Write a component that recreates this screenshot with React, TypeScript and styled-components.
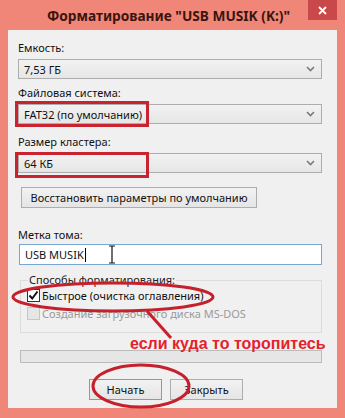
import React from 'react';
import styled, { createGlobalStyle } from 'styled-components';

const GlobalStyle = createGlobalStyle`
  html, body {
    margin: 0;
    padding: 0;
    background: #f08678;
  }
  * {
    box-sizing: border-box;
  }
`;

const Window = styled.div`
  position: relative;
  width: 345px;
  height: 418px;
  background: #f08678;
  display: flex;
  flex-direction: column;
  font-family: 'Noto Sans', 'Open Sans', sans-serif;
  font-size: 11px;
  color: #111;
  overflow: hidden;
`;

const TitleBar = styled.div`
  height: 30px;
  display: grid;
  grid-template-columns: 1fr auto 1fr;
  align-items: start;
  padding-right: 8px;
`;

const Title = styled.div`
  grid-column: 2;
  padding-top: 6px;
  font-size: 13.7px;
  font-weight: 700;
  color: #3a150f;
  white-space: nowrap;
`;

const CloseButton = styled.div`
  grid-column: 3;
  justify-self: end;
  width: 29px;
  height: 20px;
  background: #c9494b;
  color: #fff;
  display: flex;
  align-items: center;
  justify-content: center;
`;

const Content = styled.div`
  flex: 1;
  margin: 0 8px 10px;
  background: #f0f0f0;
  padding: 10px 15px 0 10px;
  display: flex;
  flex-direction: column;
`;

const Label = styled.div<{ $top?: number }>`
  line-height: 16px;
  margin-top: ${(p) => p.$top ?? 0}px;
`;

const Combo = styled.div<{ $top?: number }>`
  position: relative;
  height: 20px;
  margin-top: ${(p) => p.$top ?? 3}px;
  border: 1px solid #adadad;
  background: linear-gradient(#f2f2f2, #e6e6e6);
  display: flex;
  align-items: center;
  padding: 0 6px 0 5px;
`;

const ComboText = styled.span`
  flex: 1;
`;

const Highlight = styled.div<{ $top: number; $w: number }>`
  position: absolute;
  left: -4px;
  top: ${(p) => p.$top}px;
  width: ${(p) => p.$w}px;
  height: 26px;
  border: 3px solid #c8232e;
`;

const Button = styled.div<{ $w: number; $primary?: boolean }>`
  width: ${(p) => p.$w}px;
  height: 21px;
  border: 1px solid ${(p) => (p.$primary ? '#6aa2d6' : '#adadad')};
  background: linear-gradient(#f2f2f2, #e5e5e5);
  display: flex;
  align-items: center;
  justify-content: center;
  white-space: nowrap;
`;

const ResetRow = styled.div`
  margin-top: 14px;
  padding-left: 3px;
`;

const TextInput = styled.div`
  position: relative;
  height: 21px;
  margin-top: 1px;
  margin-left: 1px;
  border: 1px solid #7aa7d2;
  background: #fff;
  display: flex;
  align-items: center;
  padding-left: 5px;
`;

const Caret = styled.span`
  display: inline-block;
  width: 1px;
  height: 14px;
  background: #000;
  margin-left: 1px;
`;

const IBeam = styled.svg`
  position: absolute;
  left: 88px;
  top: 0;
`;

const GroupBox = styled.fieldset`
  margin: 8px 0 0 2px;
  padding: 0 0 7px 6px;
  height: 60px;
  border: 1px solid #dcdcdc;
  display: flex;
  flex-direction: column;
  gap: 2px;
`;

const Legend = styled.legend`
  padding: 0 1px;
  margin-left: 1px;
  line-height: 14px;
  color: #222;
`;

const CheckRow = styled.div<{ $disabled?: boolean }>`
  display: flex;
  align-items: center;
  gap: 2px;
  height: 16px;
  color: ${(p) => (p.$disabled ? '#9a9a9a' : '#111')};
`;

const Box = styled.div<{ $disabled?: boolean }>`
  width: 13px;
  height: 13px;
  border: 1px solid ${(p) => (p.$disabled ? '#c6c6c6' : '#333')};
  background: ${(p) => (p.$disabled ? '#e6e6e6' : '#fff')};
  display: flex;
  align-items: center;
  justify-content: center;
`;

const Progress = styled.div`
  margin: 17px 0 0 2px;
  height: 13px;
  border: 1px solid #bcbcbc;
  background: #e6e6e6;
`;

const Footer = styled.div`
  margin-top: 16px;
  display: flex;
  justify-content: center;
  gap: 8px;
  padding-right: 8px;
`;

const Annotations = styled.svg`
  position: absolute;
  left: 0;
  top: 0;
  pointer-events: none;
`;

const Note = styled.div`
  position: absolute;
  left: 130px;
  top: 335px;
  font-family: 'Liberation Sans', Arial, sans-serif;
  font-size: 16px;
  font-weight: 700;
  color: #e4222c;
  white-space: nowrap;
`;

const Chevron = () => (
  <svg width="9" height="6" viewBox="0 0 9 6">
    <polyline points="1,1 4.5,4.5 8,1" fill="none" stroke="#7a7a7a" strokeWidth="1.6" />
  </svg>
);

const Select = ({
  value,
  top,
  highlight,
}: {
  value: string;
  top?: number;
  highlight?: { top: number; w: number };
}) => (
  <Combo $top={top}>
    <ComboText>{value}</ComboText>
    <Chevron />
    {highlight && <Highlight $top={highlight.top} $w={highlight.w} />}
  </Combo>
);

const App = () => {
  return (
    <>
      <GlobalStyle />
      <Window>
        <TitleBar>
          <Title>Форматирование "USB MUSIK (K:)"</Title>
          <CloseButton>
            <svg width="9" height="9" viewBox="0 0 9 9">
              <path d="M1 1 L8 8 M8 1 L1 8" stroke="#fff" strokeWidth="1.8" />
            </svg>
          </CloseButton>
        </TitleBar>

        <Content>
          <Label>Емкость:</Label>
          <Select value="7,53 ГБ" />

          <Label $top={6}>Файловая система:</Label>
          <Select value="FAT32 (по умолчанию)" highlight={{ top: -4, w: 134 }} />

          <Label $top={10}>Размер кластера:</Label>
          <Select value="64 КБ" highlight={{ top: -2, w: 134 }} />

          <ResetRow>
            <Button $w={236}>Восстановить параметры по умолчанию</Button>
          </ResetRow>

          <Label $top={19}>Метка тома:</Label>
          <TextInput>
            USB MUSIK
            <Caret />
            <IBeam width="8" height="19" viewBox="0 0 8 19">
              <path d="M1 1 H7 M4 1 V18 M1 18 H7" stroke="#111" strokeWidth="1.2" fill="none" />
            </IBeam>
          </TextInput>

          <GroupBox>
            <Legend>Способы форматирования:</Legend>
            <CheckRow>
              <Box>
                <svg width="11" height="11" viewBox="0 0 11 11">
                  <polyline points="1.5,5.5 4.2,8.5 9.5,1.5" fill="none" stroke="#111" strokeWidth="2" />
                </svg>
              </Box>
              Быстрое (очистка оглавления)
            </CheckRow>
            <CheckRow $disabled>
              <Box $disabled />
              Создание загрузочного диска MS-DOS
            </CheckRow>
          </GroupBox>

          <Progress />

          <Footer>
            <Button $w={73} $primary>
              Начать
            </Button>
            <Button $w={73}>Закрыть</Button>
          </Footer>
        </Content>

        <Annotations width="345" height="418" viewBox="0 0 345 418">
          <g fill="none" stroke="#c5202c" strokeWidth="3">
            <ellipse cx="113" cy="297" rx="100" ry="14" />
            <line x1="147" y1="311" x2="171" y2="338" />
            <ellipse cx="141" cy="386" rx="48" ry="21" />
          </g>
        </Annotations>
        <Note>если куда то торопитесь</Note>
      </Window>
    </>
  );
};

export default App;
